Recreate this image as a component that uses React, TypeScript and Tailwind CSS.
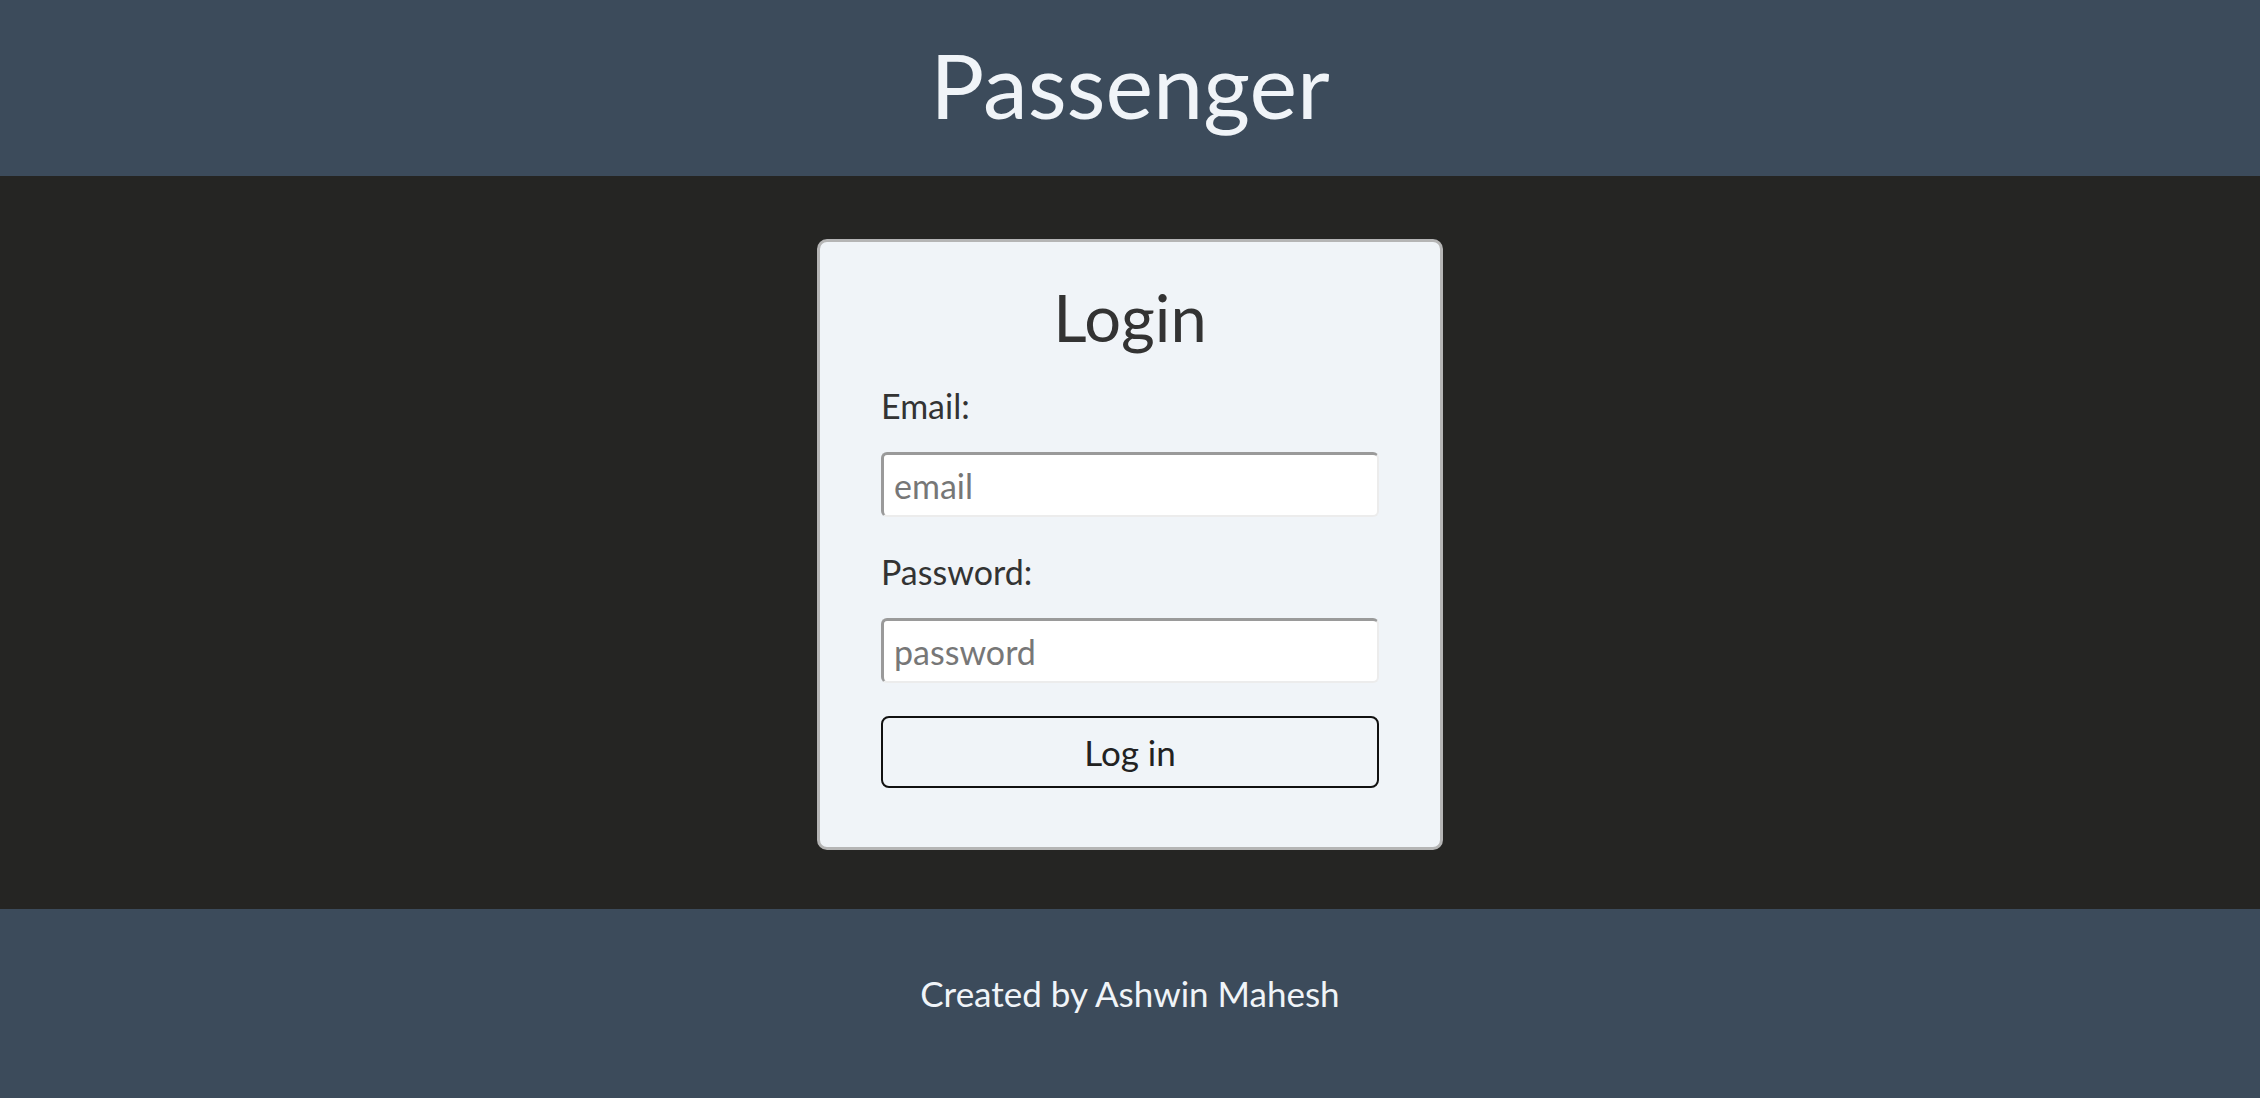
import React from 'react';

export default function App() {
    return (
        <div className="flex flex-col h-screen font-['Lato',sans-serif]">
            <header className="h-[176px] bg-[#3c4b5b] flex items-center justify-center">
                <h1 className="text-[90px] leading-none text-[#f0f4f8] -mt-[8px]">Passenger</h1>
            </header>

            <main className="flex-1 bg-[#252523] flex items-center justify-center">
                <div className="mt-[4px] w-[626px] h-[611px] bg-[#f0f4f8] border-[3px] border-[#b5b5b5] rounded-[10px] px-[61px] pt-[43px] flex flex-col">
                    <h2 className="text-[65px] leading-none text-[#333333] text-center">Login</h2>

                    <label className="mt-[39px] text-[34px] leading-none text-[#333333]">Email:</label>
                    <input
                        type="email"
                        placeholder="email"
                        className="mt-[29px] h-[65px] bg-white rounded-[6px] border-t-[3px] border-l-[3px] border-b-2 border-r-2 border-t-[#9a9a9a] border-l-[#9a9a9a] border-b-[#ececec] border-r-[#ececec] px-[10px] text-[34px] text-[#333] placeholder:text-[#777777] outline-none"
                    />

                    <label className="mt-[38px] text-[34px] leading-none text-[#333333]">Password:</label>
                    <input
                        type="password"
                        placeholder="password"
                        className="mt-[29px] h-[65px] bg-white rounded-[6px] border-t-[3px] border-l-[3px] border-b-2 border-r-2 border-t-[#9a9a9a] border-l-[#9a9a9a] border-b-[#ececec] border-r-[#ececec] px-[10px] text-[34px] text-[#333] placeholder:text-[#777777] outline-none"
                    />

                    <button className="mt-[33px] h-[72px] w-full border-2 border-[#111111] rounded-[8px] bg-[#f0f4f8] text-[35px] text-[#222222]">
                        Log in
                    </button>
                </div>
            </main>

            <footer className="h-[189px] bg-[#3c4b5b] flex items-center justify-center">
                <p className="text-[35px] leading-none text-[#f0f4f8] -mt-[20px]">Created by Ashwin Mahesh</p>
            </footer>
        </div>
    );
}
